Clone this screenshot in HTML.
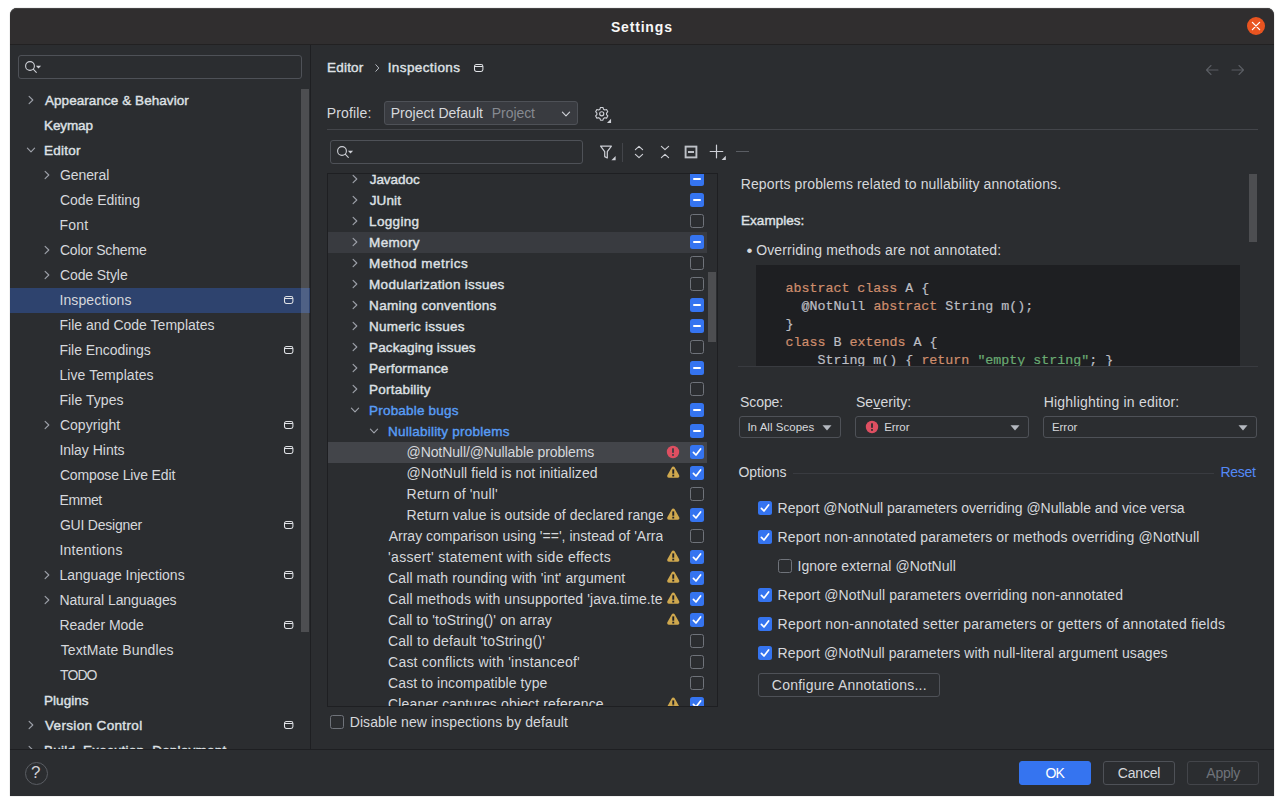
<!DOCTYPE html>
<html lang="en"><head><meta charset="utf-8"><title>Settings</title>
<style>
html,body{margin:0;padding:0;background:#fff;}
body{width:1284px;height:806px;overflow:hidden;position:relative;font-family:"Liberation Sans",sans-serif;font-size:14px;color:#D6D8DC;}
.win{position:absolute;left:0;top:0;width:1284px;height:806px;}
.win:before{content:"";position:absolute;left:10px;top:8px;width:1264px;height:788px;background:#2B2D30;border-radius:7px 7px 0 0;box-shadow:0 0 1px rgba(0,0,0,.55);}
.tb{position:absolute;left:10px;top:8px;width:1264px;height:36px;background:#302E2F;border-radius:7px 7px 0 0;box-shadow:inset 0 1px 0 rgba(255,255,255,.10);}
.tbl{position:absolute;left:10px;top:44px;width:1264px;height:1px;background:#222122;}
.t{position:absolute;white-space:pre;display:block;}
.t u{text-decoration:underline;text-underline-offset:1px;text-decoration-thickness:1px;}
.i{position:absolute;display:block;overflow:visible;}
.fld{position:absolute;box-sizing:border-box;border:1px solid #4E5157;border-radius:3px;background:#2B2D30;}
.combo{position:absolute;box-sizing:border-box;border:1px solid #4E5157;border-radius:3px;background:#393B40;}
.dd{position:absolute;box-sizing:border-box;border:1px solid #4E5157;border-radius:3px;}
.btn{position:absolute;box-sizing:border-box;border:1px solid #4E5157;border-radius:3px;}
.btn.pri{background:#3574F0;border-color:#3574F0;}
.btn.dis{border-color:#43454A;}
.side{position:absolute;left:10px;top:45px;width:300px;height:704px;overflow:hidden;}
.side>*{margin-left:-10px;margin-top:-45px;}
.sel{position:absolute;left:10px;width:300px;height:25px;background:#2E436E;}
.sb{position:absolute;background:rgba(255,255,255,.16);}
.vline{position:absolute;width:1px;background:#1E1F22;}
.hline{position:absolute;height:1px;}
.tree{position:absolute;left:327px;top:173px;width:391px;height:534px;box-sizing:border-box;border:1px solid #1E1F22;overflow:hidden;}
.row{position:absolute;left:0;width:379px;height:21px;}
.clip{position:absolute;left:0;width:335px;height:21px;overflow:hidden;display:block;}
.cb{position:absolute;width:14px;height:14px;box-sizing:border-box;border-radius:2.5px;display:block;}
.cb.off{border:1px solid #6F737A;}
.cb.on{background:#3574F0;}
.cb svg{display:block;}
.mn{position:absolute;left:3px;top:6px;width:8px;height:2px;background:#fff;border-radius:1px;}
.desc{position:absolute;left:738px;top:174px;width:520px;height:192px;overflow:hidden;}
.code{position:absolute;background:#1E1F22;}
.code pre{margin:0;position:absolute;left:29.4px;top:14.8px;-webkit-text-stroke:0.2px currentColor;font-family:"Liberation Mono",monospace;font-size:13.333px;line-height:18px;color:#BCBEC4;}
.code b{font-weight:normal;color:#CF8E6D;}
.code i{font-style:normal;color:#6AAB73;}
.help{position:absolute;left:25px;top:762px;width:23px;height:23px;box-sizing:border-box;border:1px solid #5A5D63;border-radius:50%;}
</style></head>
<body>
<div class="win">
<div class="tb"></div><div class="tbl"></div>
<span id="t1" class="t title" style="left:610.90px;letter-spacing:0.829px;top:15.6px;height:22px;line-height:22px;color:#F7F7F7;font-size:14px;font-weight:bold;">Settings</span>
<svg class="i" style="left:1247px;top:17px" width="18" height="18" viewBox="0 0 18 18"><circle cx="9" cy="9" r="9" fill="#E95420"/><path d="M5.4 5.4 L12.6 12.6 M12.6 5.4 L5.4 12.6" stroke="#fff" stroke-width="1.3" stroke-linecap="round"/></svg>
<div class="fld" style="left:18px;top:55px;width:284px;height:24px"></div>
<svg class="i" style="left:24px;top:60px" width="18" height="14" viewBox="0 0 18 14"><circle cx="6" cy="6" r="4.4" fill="none" stroke="#CED0D6" stroke-width="1.1"/><path d="M9.2 9.2 L12.3 12.3" stroke="#CED0D6" stroke-width="1.1" stroke-linecap="round"/><path d="M11.9 5.8 L17.1 5.8 L14.5 8.6Z" fill="#CED0D6"/></svg>
<div class="side">
<span id="t2" class="t " style="left:44.93px;letter-spacing:0.065px;top:88px;height:25px;line-height:25px;color:#DFE1E5;-webkit-text-stroke:0.4px currentColor;font-size:13.5px;">Appearance &amp; Behavior</span>
<svg class="i" style="left:25.5px;top:94px" width="10" height="12" viewBox="0 0 10 12"><path d="M3.1 2.4 L6.8 6 L3.1 9.6" fill="none" stroke="#9DA0A8" stroke-width="1.15" stroke-linecap="round" stroke-linejoin="round"/></svg>
<span id="t3" class="t " style="left:44.02px;letter-spacing:-0.114px;top:113px;height:25px;line-height:25px;color:#DFE1E5;-webkit-text-stroke:0.4px currentColor;font-size:13.5px;">Keymap</span>
<span id="t4" class="t " style="left:44.02px;letter-spacing:0.220px;top:138px;height:25px;line-height:25px;color:#DFE1E5;-webkit-text-stroke:0.4px currentColor;font-size:13.5px;">Editor</span>
<svg class="i" style="left:24.5px;top:145px" width="12" height="10" viewBox="0 0 12 10"><path d="M2.4 3.1 L6 6.8 L9.6 3.1" fill="none" stroke="#9DA0A8" stroke-width="1.15" stroke-linecap="round" stroke-linejoin="round"/></svg>
<span id="t5" class="t " style="left:59.90px;letter-spacing:-0.071px;top:163px;height:25px;line-height:25px;">General</span>
<svg class="i" style="left:42px;top:169px" width="10" height="12" viewBox="0 0 10 12"><path d="M3.1 2.4 L6.8 6 L3.1 9.6" fill="none" stroke="#9DA0A8" stroke-width="1.15" stroke-linecap="round" stroke-linejoin="round"/></svg>
<span id="t6" class="t " style="left:59.90px;letter-spacing:-0.013px;top:188px;height:25px;line-height:25px;">Code Editing</span>
<span id="t7" class="t " style="left:59.50px;letter-spacing:0.200px;top:213px;height:25px;line-height:25px;">Font</span>
<span id="t8" class="t " style="left:59.90px;letter-spacing:-0.173px;top:238px;height:25px;line-height:25px;">Color Scheme</span>
<svg class="i" style="left:42px;top:244px" width="10" height="12" viewBox="0 0 10 12"><path d="M3.1 2.4 L6.8 6 L3.1 9.6" fill="none" stroke="#9DA0A8" stroke-width="1.15" stroke-linecap="round" stroke-linejoin="round"/></svg>
<span id="t9" class="t " style="left:59.90px;letter-spacing:-0.078px;top:263px;height:25px;line-height:25px;">Code Style</span>
<svg class="i" style="left:42px;top:269px" width="10" height="12" viewBox="0 0 10 12"><path d="M3.1 2.4 L6.8 6 L3.1 9.6" fill="none" stroke="#9DA0A8" stroke-width="1.15" stroke-linecap="round" stroke-linejoin="round"/></svg>
<div class="sel" style="top:288px"></div>
<span id="t10" class="t " style="left:59.39px;letter-spacing:0.133px;top:288px;height:25px;line-height:25px;">Inspections</span>
<svg class="i" style="left:284px;top:296px" width="10" height="9" viewBox="0 0 10 9"><rect x="0.5" y="0.5" width="8.4" height="7" rx="1.9" fill="none" stroke="#DFE1E5" stroke-width="1.05"/><path d="M0.6 2.5 L8.8 2.5" stroke="#DFE1E5" stroke-width="1"/></svg>
<span id="t11" class="t " style="left:59.50px;letter-spacing:0.020px;top:313px;height:25px;line-height:25px;">File and Code Templates</span>
<span id="t12" class="t " style="left:59.50px;letter-spacing:-0.045px;top:338px;height:25px;line-height:25px;">File Encodings</span>
<svg class="i" style="left:284px;top:346px" width="10" height="9" viewBox="0 0 10 9"><rect x="0.5" y="0.5" width="8.4" height="7" rx="1.9" fill="none" stroke="#DFE1E5" stroke-width="1.05"/><path d="M0.6 2.5 L8.8 2.5" stroke="#DFE1E5" stroke-width="1"/></svg>
<span id="t13" class="t " style="left:59.50px;letter-spacing:0.069px;top:363px;height:25px;line-height:25px;">Live Templates</span>
<span id="t14" class="t " style="left:59.50px;letter-spacing:0.049px;top:388px;height:25px;line-height:25px;">File Types</span>
<span id="t15" class="t " style="left:59.90px;letter-spacing:0.037px;top:413px;height:25px;line-height:25px;">Copyright</span>
<svg class="i" style="left:42px;top:419px" width="10" height="12" viewBox="0 0 10 12"><path d="M3.1 2.4 L6.8 6 L3.1 9.6" fill="none" stroke="#9DA0A8" stroke-width="1.15" stroke-linecap="round" stroke-linejoin="round"/></svg>
<svg class="i" style="left:284px;top:421px" width="10" height="9" viewBox="0 0 10 9"><rect x="0.5" y="0.5" width="8.4" height="7" rx="1.9" fill="none" stroke="#DFE1E5" stroke-width="1.05"/><path d="M0.6 2.5 L8.8 2.5" stroke="#DFE1E5" stroke-width="1"/></svg>
<span id="t16" class="t " style="left:59.39px;letter-spacing:-0.019px;top:438px;height:25px;line-height:25px;">Inlay Hints</span>
<svg class="i" style="left:284px;top:446px" width="10" height="9" viewBox="0 0 10 9"><rect x="0.5" y="0.5" width="8.4" height="7" rx="1.9" fill="none" stroke="#DFE1E5" stroke-width="1.05"/><path d="M0.6 2.5 L8.8 2.5" stroke="#DFE1E5" stroke-width="1"/></svg>
<span id="t17" class="t " style="left:59.90px;letter-spacing:-0.130px;top:463px;height:25px;line-height:25px;">Compose Live Edit</span>
<span id="t18" class="t " style="left:59.50px;letter-spacing:-0.421px;top:488px;height:25px;line-height:25px;">Emmet</span>
<span id="t19" class="t " style="left:59.90px;letter-spacing:-0.225px;top:513px;height:25px;line-height:25px;">GUI Designer</span>
<svg class="i" style="left:284px;top:521px" width="10" height="9" viewBox="0 0 10 9"><rect x="0.5" y="0.5" width="8.4" height="7" rx="1.9" fill="none" stroke="#DFE1E5" stroke-width="1.05"/><path d="M0.6 2.5 L8.8 2.5" stroke="#DFE1E5" stroke-width="1"/></svg>
<span id="t20" class="t " style="left:59.39px;letter-spacing:0.259px;top:538px;height:25px;line-height:25px;">Intentions</span>
<span id="t21" class="t " style="left:59.50px;letter-spacing:-0.011px;top:563px;height:25px;line-height:25px;">Language Injections</span>
<svg class="i" style="left:42px;top:569px" width="10" height="12" viewBox="0 0 10 12"><path d="M3.1 2.4 L6.8 6 L3.1 9.6" fill="none" stroke="#9DA0A8" stroke-width="1.15" stroke-linecap="round" stroke-linejoin="round"/></svg>
<svg class="i" style="left:284px;top:571px" width="10" height="9" viewBox="0 0 10 9"><rect x="0.5" y="0.5" width="8.4" height="7" rx="1.9" fill="none" stroke="#DFE1E5" stroke-width="1.05"/><path d="M0.6 2.5 L8.8 2.5" stroke="#DFE1E5" stroke-width="1"/></svg>
<span id="t22" class="t " style="left:59.50px;letter-spacing:-0.075px;top:588px;height:25px;line-height:25px;">Natural Languages</span>
<svg class="i" style="left:42px;top:594px" width="10" height="12" viewBox="0 0 10 12"><path d="M3.1 2.4 L6.8 6 L3.1 9.6" fill="none" stroke="#9DA0A8" stroke-width="1.15" stroke-linecap="round" stroke-linejoin="round"/></svg>
<span id="t23" class="t " style="left:59.50px;letter-spacing:-0.050px;top:613px;height:25px;line-height:25px;">Reader Mode</span>
<svg class="i" style="left:284px;top:621px" width="10" height="9" viewBox="0 0 10 9"><rect x="0.5" y="0.5" width="8.4" height="7" rx="1.9" fill="none" stroke="#DFE1E5" stroke-width="1.05"/><path d="M0.6 2.5 L8.8 2.5" stroke="#DFE1E5" stroke-width="1"/></svg>
<span id="t24" class="t " style="left:60.77px;letter-spacing:0.102px;top:638px;height:25px;line-height:25px;">TextMate Bundles</span>
<span id="t25" class="t " style="left:60.02px;letter-spacing:-0.900px;top:663px;height:25px;line-height:25px;">TODO</span>
<span id="t26" class="t " style="left:44.02px;letter-spacing:0.043px;top:688px;height:25px;line-height:25px;color:#DFE1E5;-webkit-text-stroke:0.4px currentColor;font-size:13.5px;">Plugins</span>
<span id="t27" class="t " style="left:44.91px;letter-spacing:0.355px;top:713px;height:25px;line-height:25px;color:#DFE1E5;-webkit-text-stroke:0.4px currentColor;font-size:13.5px;">Version Control</span>
<svg class="i" style="left:25.5px;top:719px" width="10" height="12" viewBox="0 0 10 12"><path d="M3.1 2.4 L6.8 6 L3.1 9.6" fill="none" stroke="#9DA0A8" stroke-width="1.15" stroke-linecap="round" stroke-linejoin="round"/></svg>
<svg class="i" style="left:284px;top:721px" width="10" height="9" viewBox="0 0 10 9"><rect x="0.5" y="0.5" width="8.4" height="7" rx="1.9" fill="none" stroke="#DFE1E5" stroke-width="1.05"/><path d="M0.6 2.5 L8.8 2.5" stroke="#DFE1E5" stroke-width="1"/></svg>
<span id="t28" class="t " style="left:44.02px;letter-spacing:0.214px;top:738px;height:25px;line-height:25px;color:#DFE1E5;-webkit-text-stroke:0.4px currentColor;font-size:13.5px;">Build, Execution, Deployment</span>
<svg class="i" style="left:25.5px;top:744px" width="10" height="12" viewBox="0 0 10 12"><path d="M3.1 2.4 L6.8 6 L3.1 9.6" fill="none" stroke="#9DA0A8" stroke-width="1.15" stroke-linecap="round" stroke-linejoin="round"/></svg>
<div class="sb" style="left:301px;top:89px;width:8px;height:543px"></div>
</div>
<div class="vline" style="left:310px;top:45px;height:704px"></div>
<span id="t29" class="t " style="left:327.12px;letter-spacing:0.180px;top:55px;height:25px;line-height:25px;color:#DFE1E5;-webkit-text-stroke:0.4px currentColor;font-size:13.5px;">Editor</span>
<svg class="i" style="left:372px;top:62px" width="10" height="12" viewBox="0 0 10 12"><path d="M3.8 2.7 L6.8 6 L3.8 9.3" fill="none" stroke="#B4B8BF" stroke-width="1" stroke-linecap="round" stroke-linejoin="round"/></svg>
<span id="t30" class="t " style="left:387.70px;letter-spacing:0.398px;top:55px;height:25px;line-height:25px;color:#DFE1E5;-webkit-text-stroke:0.4px currentColor;font-size:13.5px;">Inspections</span>
<svg class="i" style="left:474px;top:64px" width="10" height="9" viewBox="0 0 10 9"><rect x="0.5" y="0.5" width="8.4" height="7" rx="1.9" fill="none" stroke="#DFE1E5" stroke-width="1.05"/><path d="M0.6 2.5 L8.8 2.5" stroke="#DFE1E5" stroke-width="1"/></svg>
<svg class="i" style="left:1205px;top:63px" width="14" height="14" viewBox="0 0 14 14"><path d="M13 7 L1.5 7 M6 2.5 L1.5 7 L6 11.5" fill="none" stroke="#5A5D63" stroke-width="1.1" stroke-linecap="round" stroke-linejoin="round"/></svg>
<svg class="i" style="left:1231px;top:63px" width="14" height="14" viewBox="0 0 14 14"><path d="M1 7 L12.5 7 M8 2.5 L12.5 7 L8 11.5" fill="none" stroke="#5A5D63" stroke-width="1.1" stroke-linecap="round" stroke-linejoin="round"/></svg>
<span id="t31" class="t " style="left:326.80px;letter-spacing:0.151px;top:101px;height:24px;line-height:24px;">Profile:</span>
<div class="combo" style="left:384px;top:101px;width:194px;height:24px"></div>
<span id="t32" class="t " style="left:390.70px;letter-spacing:0.029px;top:101px;height:24px;line-height:24px;">Project Default</span>
<span id="t33" class="t " style="left:491.80px;letter-spacing:-0.062px;top:101px;height:24px;line-height:24px;color:#868A91;">Project</span>
<svg class="i" style="left:560px;top:108.5px" width="12" height="10" viewBox="0 0 12 10"><path d="M2.4 3.1 L6 6.8 L9.6 3.1" fill="none" stroke="#CED0D6" stroke-width="1.15" stroke-linecap="round" stroke-linejoin="round"/></svg>
<svg class="i" style="left:593.5px;top:105.7px" width="17.5" height="17.5" viewBox="0 0 17 17"><path d="M6.3 1.4h2.4l.5 1.7 1.3.75 1.7-.4 1.2 2.1-1.2 1.3v1.5l1.2 1.3-1.2 2.1-1.7-.4-1.3.75-.5 1.7H6.3l-.5-1.7-1.3-.75-1.7.4-1.2-2.1 1.2-1.3V6.85L1.6 5.55l1.2-2.1 1.7.4 1.3-.75z" fill="none" stroke="#CED0D6" stroke-width="1.1" stroke-linejoin="round"/><circle cx="7.5" cy="7.6" r="2" fill="none" stroke="#CED0D6" stroke-width="1.1"/><path d="M16.6 12.4 L16.6 16.4 L12.6 16.4Z" fill="#CED0D6"/></svg>
<div class="hline" style="left:327px;top:129px;width:931px;background:#43454A"></div>
<div class="fld" style="left:330px;top:140px;width:253px;height:24px"></div>
<svg class="i" style="left:336px;top:145px" width="18" height="14" viewBox="0 0 18 14"><circle cx="6" cy="6" r="4.4" fill="none" stroke="#CED0D6" stroke-width="1.1"/><path d="M9.2 9.2 L12.3 12.3" stroke="#CED0D6" stroke-width="1.1" stroke-linecap="round"/><path d="M11.9 5.8 L17.1 5.8 L14.5 8.6Z" fill="#CED0D6"/></svg>
<svg class="i" style="left:599px;top:144px" width="18" height="17" viewBox="0 0 18 17"><path d="M1.6 2.1 L12.4 2.1 L8.3 7.6 L8.3 14 L5.7 12.6 L5.7 7.6Z" fill="none" stroke="#CED0D6" stroke-width="1.2" stroke-linejoin="round"/><path d="M16.6 12 L16.6 16.2 L12.4 16.2Z" fill="#CED0D6"/></svg>
<div class="vline" style="left:622px;top:143px;height:19px;background:#43454A"></div>
<svg class="i" style="left:632px;top:144px" width="14" height="16" viewBox="0 0 14 16"><path d="M3.4 5.7 L7 2.3 L10.6 5.7 M3.4 10.3 L7 13.7 L10.6 10.3" fill="none" stroke="#CED0D6" stroke-width="1.15" stroke-linecap="round" stroke-linejoin="round"/></svg>
<svg class="i" style="left:658px;top:144px" width="14" height="16" viewBox="0 0 14 16"><path d="M3.4 2.3 L7 5.7 L10.6 2.3 M3.4 13.7 L7 10.3 L10.6 13.7" fill="none" stroke="#CED0D6" stroke-width="1.15" stroke-linecap="round" stroke-linejoin="round"/></svg>
<svg class="i" style="left:684px;top:145px" width="14" height="14" viewBox="0 0 14 14"><rect x="1.6" y="1.6" width="10.8" height="10.8" fill="none" stroke="#BEC1C7" stroke-width="1.9"/><rect x="4" y="6" width="6" height="2" fill="#BEC1C7"/></svg>
<svg class="i" style="left:709px;top:144px" width="18" height="18" viewBox="0 0 18 18"><path d="M7.5 1.2 L7.5 13.8 M1.2 7.5 L13.8 7.5" stroke="#CED0D6" stroke-width="1.2" stroke-linecap="round"/><path d="M16.8 11.8 L16.8 16 L12.6 16Z" fill="#CED0D6"/></svg>
<div class="hline" style="left:736px;top:151px;width:13px;background:#5A5D63"></div>
<div class="tree">
<span class="clip" style="top:-5px"><span id="t34" class="t " style="left:41.70px;letter-spacing:-0.038px;top:0px;height:21px;line-height:21px;color:#DFE1E5;-webkit-text-stroke:0.4px currentColor;font-size:13.5px;">Javadoc</span></span>
<svg class="i" style="left:22px;top:-1px" width="10" height="12" viewBox="0 0 10 12"><path d="M3.1 2.4 L6.8 6 L3.1 9.6" fill="none" stroke="#9DA0A8" stroke-width="1.15" stroke-linecap="round" stroke-linejoin="round"/></svg>
<span class="cb on" style="left:362px;top:-2px"><i class="mn"></i></span>
<span class="clip" style="top:16px"><span id="t35" class="t " style="left:41.70px;letter-spacing:0.141px;top:0px;height:21px;line-height:21px;color:#DFE1E5;-webkit-text-stroke:0.4px currentColor;font-size:13.5px;">JUnit</span></span>
<svg class="i" style="left:22px;top:20px" width="10" height="12" viewBox="0 0 10 12"><path d="M3.1 2.4 L6.8 6 L3.1 9.6" fill="none" stroke="#9DA0A8" stroke-width="1.15" stroke-linecap="round" stroke-linejoin="round"/></svg>
<span class="cb on" style="left:362px;top:19px"><i class="mn"></i></span>
<span class="clip" style="top:37px"><span id="t36" class="t " style="left:41.12px;letter-spacing:0.316px;top:0px;height:21px;line-height:21px;color:#DFE1E5;-webkit-text-stroke:0.4px currentColor;font-size:13.5px;">Logging</span></span>
<svg class="i" style="left:22px;top:41px" width="10" height="12" viewBox="0 0 10 12"><path d="M3.1 2.4 L6.8 6 L3.1 9.6" fill="none" stroke="#9DA0A8" stroke-width="1.15" stroke-linecap="round" stroke-linejoin="round"/></svg>
<span class="cb off" style="left:362px;top:40px"></span>
<div class="row" style="top:58px;background:#393B40"></div>
<span class="clip" style="top:58px"><span id="t37" class="t " style="left:41.12px;letter-spacing:0.316px;top:0px;height:21px;line-height:21px;color:#DFE1E5;-webkit-text-stroke:0.4px currentColor;font-size:13.5px;">Memory</span></span>
<svg class="i" style="left:22px;top:62px" width="10" height="12" viewBox="0 0 10 12"><path d="M3.1 2.4 L6.8 6 L3.1 9.6" fill="none" stroke="#9DA0A8" stroke-width="1.15" stroke-linecap="round" stroke-linejoin="round"/></svg>
<span class="cb on" style="left:362px;top:61px"><i class="mn"></i></span>
<span class="clip" style="top:79px"><span id="t38" class="t " style="left:41.12px;letter-spacing:0.481px;top:0px;height:21px;line-height:21px;color:#DFE1E5;-webkit-text-stroke:0.4px currentColor;font-size:13.5px;">Method metrics</span></span>
<svg class="i" style="left:22px;top:83px" width="10" height="12" viewBox="0 0 10 12"><path d="M3.1 2.4 L6.8 6 L3.1 9.6" fill="none" stroke="#9DA0A8" stroke-width="1.15" stroke-linecap="round" stroke-linejoin="round"/></svg>
<span class="cb off" style="left:362px;top:82px"></span>
<span class="clip" style="top:100px"><span id="t39" class="t " style="left:41.12px;letter-spacing:0.268px;top:0px;height:21px;line-height:21px;color:#DFE1E5;-webkit-text-stroke:0.4px currentColor;font-size:13.5px;">Modularization issues</span></span>
<svg class="i" style="left:22px;top:104px" width="10" height="12" viewBox="0 0 10 12"><path d="M3.1 2.4 L6.8 6 L3.1 9.6" fill="none" stroke="#9DA0A8" stroke-width="1.15" stroke-linecap="round" stroke-linejoin="round"/></svg>
<span class="cb off" style="left:362px;top:103px"></span>
<span class="clip" style="top:121px"><span id="t40" class="t " style="left:41.12px;letter-spacing:0.286px;top:0px;height:21px;line-height:21px;color:#DFE1E5;-webkit-text-stroke:0.4px currentColor;font-size:13.5px;">Naming conventions</span></span>
<svg class="i" style="left:22px;top:125px" width="10" height="12" viewBox="0 0 10 12"><path d="M3.1 2.4 L6.8 6 L3.1 9.6" fill="none" stroke="#9DA0A8" stroke-width="1.15" stroke-linecap="round" stroke-linejoin="round"/></svg>
<span class="cb on" style="left:362px;top:124px"><i class="mn"></i></span>
<span class="clip" style="top:142px"><span id="t41" class="t " style="left:41.12px;letter-spacing:0.235px;top:0px;height:21px;line-height:21px;color:#DFE1E5;-webkit-text-stroke:0.4px currentColor;font-size:13.5px;">Numeric issues</span></span>
<svg class="i" style="left:22px;top:146px" width="10" height="12" viewBox="0 0 10 12"><path d="M3.1 2.4 L6.8 6 L3.1 9.6" fill="none" stroke="#9DA0A8" stroke-width="1.15" stroke-linecap="round" stroke-linejoin="round"/></svg>
<span class="cb on" style="left:362px;top:145px"><i class="mn"></i></span>
<span class="clip" style="top:163px"><span id="t42" class="t " style="left:41.12px;letter-spacing:0.094px;top:0px;height:21px;line-height:21px;color:#DFE1E5;-webkit-text-stroke:0.4px currentColor;font-size:13.5px;">Packaging issues</span></span>
<svg class="i" style="left:22px;top:167px" width="10" height="12" viewBox="0 0 10 12"><path d="M3.1 2.4 L6.8 6 L3.1 9.6" fill="none" stroke="#9DA0A8" stroke-width="1.15" stroke-linecap="round" stroke-linejoin="round"/></svg>
<span class="cb off" style="left:362px;top:166px"></span>
<span class="clip" style="top:184px"><span id="t43" class="t " style="left:41.12px;letter-spacing:0.198px;top:0px;height:21px;line-height:21px;color:#DFE1E5;-webkit-text-stroke:0.4px currentColor;font-size:13.5px;">Performance</span></span>
<svg class="i" style="left:22px;top:188px" width="10" height="12" viewBox="0 0 10 12"><path d="M3.1 2.4 L6.8 6 L3.1 9.6" fill="none" stroke="#9DA0A8" stroke-width="1.15" stroke-linecap="round" stroke-linejoin="round"/></svg>
<span class="cb on" style="left:362px;top:187px"><i class="mn"></i></span>
<span class="clip" style="top:205px"><span id="t44" class="t " style="left:41.12px;letter-spacing:0.209px;top:0px;height:21px;line-height:21px;color:#DFE1E5;-webkit-text-stroke:0.4px currentColor;font-size:13.5px;">Portability</span></span>
<svg class="i" style="left:22px;top:209px" width="10" height="12" viewBox="0 0 10 12"><path d="M3.1 2.4 L6.8 6 L3.1 9.6" fill="none" stroke="#9DA0A8" stroke-width="1.15" stroke-linecap="round" stroke-linejoin="round"/></svg>
<span class="cb off" style="left:362px;top:208px"></span>
<span class="clip" style="top:226px"><span id="t45" class="t " style="left:41.12px;letter-spacing:0.184px;top:0px;height:21px;line-height:21px;color:#589DF6;-webkit-text-stroke:0.4px currentColor;font-size:13.5px;">Probable bugs</span></span>
<svg class="i" style="left:21px;top:231px" width="12" height="10" viewBox="0 0 12 10"><path d="M2.4 3.1 L6 6.8 L9.6 3.1" fill="none" stroke="#9DA0A8" stroke-width="1.15" stroke-linecap="round" stroke-linejoin="round"/></svg>
<span class="cb on" style="left:362px;top:229px"><i class="mn"></i></span>
<span class="clip" style="top:247px"><span id="t46" class="t " style="left:60.02px;letter-spacing:0.232px;top:0px;height:21px;line-height:21px;color:#589DF6;-webkit-text-stroke:0.4px currentColor;font-size:13.5px;">Nullability problems</span></span>
<svg class="i" style="left:40px;top:252px" width="12" height="10" viewBox="0 0 12 10"><path d="M2.4 3.1 L6 6.8 L9.6 3.1" fill="none" stroke="#9DA0A8" stroke-width="1.15" stroke-linecap="round" stroke-linejoin="round"/></svg>
<span class="cb on" style="left:362px;top:250px"><i class="mn"></i></span>
<div class="row" style="top:268px;background:#43454A"></div>
<span class="clip" style="top:268px"><span id="t47" class="t " style="left:78.56px;letter-spacing:-0.095px;top:0px;height:21px;line-height:21px;">@NotNull/@Nullable problems</span></span>
<svg class="i" style="left:339px;top:272px" width="12" height="12" viewBox="0 0 12 12"><circle cx="6" cy="6" r="6.2" fill="#DE4F61"/><rect x="5.1" y="2.3" width="1.8" height="4.5" fill="#3B3E45"/><rect x="5.1" y="8.1" width="1.8" height="1.7" fill="#3B3E45"/></svg>
<span class="cb on" style="left:362px;top:271px"><svg width="14" height="14" viewBox="0 0 14 14"><path d="M3.4 7.3 L6 10 L10.6 3.9" fill="none" stroke="#fff" stroke-width="1.7" stroke-linecap="round" stroke-linejoin="round"/></svg></span>
<span class="clip" style="top:289px"><span id="t48" class="t " style="left:78.56px;letter-spacing:0.079px;top:0px;height:21px;line-height:21px;">@NotNull field is not initialized</span></span>
<svg class="i" style="left:338.75px;top:292.4px" width="13" height="12" viewBox="0 0 13 12"><path d="M6.25 2.1 L10.75 10.1 L1.75 10.1Z" fill="#CFA84E" stroke="#CFA84E" stroke-width="3.2" stroke-linejoin="round"/><rect x="5.3" y="3.4" width="1.9" height="4.3" fill="#1F2128"/><rect x="5.3" y="8.7" width="1.9" height="1.8" fill="#1F2128"/></svg>
<span class="cb on" style="left:362px;top:292px"><svg width="14" height="14" viewBox="0 0 14 14"><path d="M3.4 7.3 L6 10 L10.6 3.9" fill="none" stroke="#fff" stroke-width="1.7" stroke-linecap="round" stroke-linejoin="round"/></svg></span>
<span class="clip" style="top:310px"><span id="t49" class="t " style="left:78.60px;letter-spacing:0.171px;top:0px;height:21px;line-height:21px;">Return of 'null'</span></span>
<span class="cb off" style="left:362px;top:313px"></span>
<span class="clip" style="top:331px"><span id="t50" class="t " style="left:78.60px;letter-spacing:0.046px;top:0px;height:21px;line-height:21px;">Return value is outside of declared range</span></span>
<svg class="i" style="left:338.75px;top:334.4px" width="13" height="12" viewBox="0 0 13 12"><path d="M6.25 2.1 L10.75 10.1 L1.75 10.1Z" fill="#CFA84E" stroke="#CFA84E" stroke-width="3.2" stroke-linejoin="round"/><rect x="5.3" y="3.4" width="1.9" height="4.3" fill="#1F2128"/><rect x="5.3" y="8.7" width="1.9" height="1.8" fill="#1F2128"/></svg>
<span class="cb on" style="left:362px;top:334px"><svg width="14" height="14" viewBox="0 0 14 14"><path d="M3.4 7.3 L6 10 L10.6 3.9" fill="none" stroke="#fff" stroke-width="1.7" stroke-linecap="round" stroke-linejoin="round"/></svg></span>
<span class="clip" style="top:352px"><span id="t51" class="t " style="left:60.65px;letter-spacing:0.012px;top:0px;height:21px;line-height:21px;">Array comparison using '==', instead of 'Arrays.equals()'</span></span>
<span class="cb off" style="left:362px;top:355px"></span>
<span class="clip" style="top:373px"><span id="t52" class="t " style="left:60.10px;letter-spacing:0.301px;top:0px;height:21px;line-height:21px;">'assert' statement with side effects</span></span>
<svg class="i" style="left:338.75px;top:376.4px" width="13" height="12" viewBox="0 0 13 12"><path d="M6.25 2.1 L10.75 10.1 L1.75 10.1Z" fill="#CFA84E" stroke="#CFA84E" stroke-width="3.2" stroke-linejoin="round"/><rect x="5.3" y="3.4" width="1.9" height="4.3" fill="#1F2128"/><rect x="5.3" y="8.7" width="1.9" height="1.8" fill="#1F2128"/></svg>
<span class="cb on" style="left:362px;top:376px"><svg width="14" height="14" viewBox="0 0 14 14"><path d="M3.4 7.3 L6 10 L10.6 3.9" fill="none" stroke="#fff" stroke-width="1.7" stroke-linecap="round" stroke-linejoin="round"/></svg></span>
<span class="clip" style="top:394px"><span id="t53" class="t " style="left:60.10px;letter-spacing:0.103px;top:0px;height:21px;line-height:21px;">Call math rounding with 'int' argument</span></span>
<svg class="i" style="left:338.75px;top:397.4px" width="13" height="12" viewBox="0 0 13 12"><path d="M6.25 2.1 L10.75 10.1 L1.75 10.1Z" fill="#CFA84E" stroke="#CFA84E" stroke-width="3.2" stroke-linejoin="round"/><rect x="5.3" y="3.4" width="1.9" height="4.3" fill="#1F2128"/><rect x="5.3" y="8.7" width="1.9" height="1.8" fill="#1F2128"/></svg>
<span class="cb on" style="left:362px;top:397px"><svg width="14" height="14" viewBox="0 0 14 14"><path d="M3.4 7.3 L6 10 L10.6 3.9" fill="none" stroke="#fff" stroke-width="1.7" stroke-linecap="round" stroke-linejoin="round"/></svg></span>
<span class="clip" style="top:415px"><span id="t54" class="t " style="left:60.10px;letter-spacing:0.099px;top:0px;height:21px;line-height:21px;">Call methods with unsupported 'java.time.temporal' units</span></span>
<svg class="i" style="left:338.75px;top:418.4px" width="13" height="12" viewBox="0 0 13 12"><path d="M6.25 2.1 L10.75 10.1 L1.75 10.1Z" fill="#CFA84E" stroke="#CFA84E" stroke-width="3.2" stroke-linejoin="round"/><rect x="5.3" y="3.4" width="1.9" height="4.3" fill="#1F2128"/><rect x="5.3" y="8.7" width="1.9" height="1.8" fill="#1F2128"/></svg>
<span class="cb on" style="left:362px;top:418px"><svg width="14" height="14" viewBox="0 0 14 14"><path d="M3.4 7.3 L6 10 L10.6 3.9" fill="none" stroke="#fff" stroke-width="1.7" stroke-linecap="round" stroke-linejoin="round"/></svg></span>
<span class="clip" style="top:436px"><span id="t55" class="t " style="left:60.10px;letter-spacing:0.070px;top:0px;height:21px;line-height:21px;">Call to 'toString()' on array</span></span>
<svg class="i" style="left:338.75px;top:439.4px" width="13" height="12" viewBox="0 0 13 12"><path d="M6.25 2.1 L10.75 10.1 L1.75 10.1Z" fill="#CFA84E" stroke="#CFA84E" stroke-width="3.2" stroke-linejoin="round"/><rect x="5.3" y="3.4" width="1.9" height="4.3" fill="#1F2128"/><rect x="5.3" y="8.7" width="1.9" height="1.8" fill="#1F2128"/></svg>
<span class="cb on" style="left:362px;top:439px"><svg width="14" height="14" viewBox="0 0 14 14"><path d="M3.4 7.3 L6 10 L10.6 3.9" fill="none" stroke="#fff" stroke-width="1.7" stroke-linecap="round" stroke-linejoin="round"/></svg></span>
<span class="clip" style="top:457px"><span id="t56" class="t " style="left:60.10px;letter-spacing:0.168px;top:0px;height:21px;line-height:21px;">Call to default 'toString()'</span></span>
<span class="cb off" style="left:362px;top:460px"></span>
<span class="clip" style="top:478px"><span id="t57" class="t " style="left:60.10px;letter-spacing:0.211px;top:0px;height:21px;line-height:21px;">Cast conflicts with 'instanceof'</span></span>
<span class="cb off" style="left:362px;top:481px"></span>
<span class="clip" style="top:499px"><span id="t58" class="t " style="left:60.10px;letter-spacing:0.085px;top:0px;height:21px;line-height:21px;">Cast to incompatible type</span></span>
<span class="cb off" style="left:362px;top:502px"></span>
<span class="clip" style="top:520px"><span id="t59" class="t " style="left:60.10px;letter-spacing:0.144px;top:0px;height:21px;line-height:21px;">Cleaner captures object reference</span></span>
<svg class="i" style="left:338.75px;top:523.4px" width="13" height="12" viewBox="0 0 13 12"><path d="M6.25 2.1 L10.75 10.1 L1.75 10.1Z" fill="#CFA84E" stroke="#CFA84E" stroke-width="3.2" stroke-linejoin="round"/><rect x="5.3" y="3.4" width="1.9" height="4.3" fill="#1F2128"/><rect x="5.3" y="8.7" width="1.9" height="1.8" fill="#1F2128"/></svg>
<span class="cb on" style="left:362px;top:523px"><svg width="14" height="14" viewBox="0 0 14 14"><path d="M3.4 7.3 L6 10 L10.6 3.9" fill="none" stroke="#fff" stroke-width="1.7" stroke-linecap="round" stroke-linejoin="round"/></svg></span>
<div class="sb" style="left:380px;top:98px;width:8px;height:70px"></div>
</div>
<span class="cb off" style="left:330px;top:715px"></span>
<span id="t60" class="t " style="left:349.70px;letter-spacing:0.103px;top:710px;height:24px;line-height:24px;">Disable new inspections by default</span>
<div class="desc">
<span id="t61" class="t " style="left:2.70px;letter-spacing:0.118px;top:0px;height:21px;line-height:21px;">Reports problems related to nullability annotations.</span>
<span id="t62" class="t " style="left:3.02px;letter-spacing:0.034px;top:36px;height:21px;line-height:21px;color:#DFE1E5;-webkit-text-stroke:0.4px currentColor;font-size:13.5px;">Examples:</span>
<span id="t63" class="t " style="left:8.40px;letter-spacing:0.000px;top:66px;height:21px;line-height:21px;font-size:17px;">&bull;</span>
<span id="t64" class="t " style="left:18.16px;letter-spacing:0.147px;top:66px;height:21px;line-height:21px;">Overriding methods are not annotated:</span>
<div class="code" style="left:18px;top:91px;width:484px;height:120px">
<pre><b>abstract class</b> A {
  @NotNull <b>abstract</b> String m();
}
<b>class</b> B <b>extends</b> A {
    String m() { <b>return</b> <i>"empty string"</i>; }
}</pre>
</div>
<div class="sb" style="left:511px;top:0px;width:8px;height:68px"></div>
</div>
<div class="hline" style="left:738px;top:366px;width:520px;background:#393B40"></div>
<span id="t65" class="t " style="left:739.94px;letter-spacing:-0.057px;top:390px;height:24px;line-height:24px;">Scope:</span>
<span id="t66" class="t " style="left:855.94px;letter-spacing:0.095px;top:390px;height:24px;line-height:24px;">Se<u>v</u>erity:</span>
<span id="t67" class="t " style="left:1043.70px;letter-spacing:0.216px;top:390px;height:24px;line-height:24px;">Highlighting in editor:</span>
<div class="dd" style="left:739px;top:416px;width:102px;height:22px"></div>
<span id="t68" class="t " style="left:747.40px;letter-spacing:0.033px;top:415.5px;height:22px;line-height:22px;font-size:11.5px;">In All Scopes</span>
<svg class="i" style="left:822.2px;top:424.5px" width="10" height="6" viewBox="0 0 10 6"><path d="M0.5 0.3 L9.5 0.3 L5 5.6Z" fill="#B4B8BF"/></svg>
<div class="dd" style="left:855px;top:416px;width:174px;height:22px"></div>
<svg class="i" style="left:866px;top:421.2px" width="12" height="12" viewBox="0 0 12 12"><circle cx="6" cy="6" r="6.2" fill="#DE4F61"/><rect x="5.1" y="2.3" width="1.8" height="4.5" fill="#2B2D30"/><rect x="5.1" y="8.1" width="1.8" height="1.7" fill="#2B2D30"/></svg>
<span id="t69" class="t " style="left:884.14px;letter-spacing:-0.045px;top:415.5px;height:22px;line-height:22px;font-size:11.5px;">Error</span>
<svg class="i" style="left:1009.8px;top:424.5px" width="10" height="6" viewBox="0 0 10 6"><path d="M0.5 0.3 L9.5 0.3 L5 5.6Z" fill="#B4B8BF"/></svg>
<div class="dd" style="left:1043px;top:416px;width:214px;height:22px"></div>
<span id="t70" class="t " style="left:1051.94px;letter-spacing:-0.045px;top:415.5px;height:22px;line-height:22px;font-size:11.5px;">Error</span>
<svg class="i" style="left:1238px;top:424.5px" width="10" height="6" viewBox="0 0 10 6"><path d="M0.5 0.3 L9.5 0.3 L5 5.6Z" fill="#B4B8BF"/></svg>
<span id="t71" class="t " style="left:738.47px;letter-spacing:-0.044px;top:459.5px;height:24px;line-height:24px;">Options</span>
<div class="hline" style="left:793px;top:473px;width:421px;background:#393B40"></div>
<span id="t72" class="t " style="left:1220.40px;letter-spacing:-0.294px;top:459.5px;height:24px;line-height:24px;color:#548AF7;">Reset</span>
<span class="cb on" style="left:758px;top:501px"><svg width="14" height="14" viewBox="0 0 14 14"><path d="M3.4 7.3 L6 10 L10.6 3.9" fill="none" stroke="#fff" stroke-width="1.7" stroke-linecap="round" stroke-linejoin="round"/></svg></span>
<span id="t73" class="t " style="left:777.60px;letter-spacing:-0.031px;top:496px;height:24px;line-height:24px;">Report @NotNull parameters overriding @Nullable and vice versa</span>
<span class="cb on" style="left:758px;top:530px"><svg width="14" height="14" viewBox="0 0 14 14"><path d="M3.4 7.3 L6 10 L10.6 3.9" fill="none" stroke="#fff" stroke-width="1.7" stroke-linecap="round" stroke-linejoin="round"/></svg></span>
<span id="t74" class="t " style="left:777.60px;letter-spacing:0.124px;top:525px;height:24px;line-height:24px;">Report non-annotated parameters or methods overriding @NotNull</span>
<span class="cb off" style="left:778px;top:559px"></span>
<span id="t75" class="t " style="left:797.49px;letter-spacing:0.043px;top:554px;height:24px;line-height:24px;">Ignore external @NotNull</span>
<span class="cb on" style="left:758px;top:588px"><svg width="14" height="14" viewBox="0 0 14 14"><path d="M3.4 7.3 L6 10 L10.6 3.9" fill="none" stroke="#fff" stroke-width="1.7" stroke-linecap="round" stroke-linejoin="round"/></svg></span>
<span id="t76" class="t " style="left:777.60px;letter-spacing:0.103px;top:583px;height:24px;line-height:24px;">Report @NotNull parameters overriding non-annotated</span>
<span class="cb on" style="left:758px;top:617px"><svg width="14" height="14" viewBox="0 0 14 14"><path d="M3.4 7.3 L6 10 L10.6 3.9" fill="none" stroke="#fff" stroke-width="1.7" stroke-linecap="round" stroke-linejoin="round"/></svg></span>
<span id="t77" class="t " style="left:777.60px;letter-spacing:0.238px;top:612px;height:24px;line-height:24px;">Report non-annotated setter parameters or getters of annotated fields</span>
<span class="cb on" style="left:758px;top:646px"><svg width="14" height="14" viewBox="0 0 14 14"><path d="M3.4 7.3 L6 10 L10.6 3.9" fill="none" stroke="#fff" stroke-width="1.7" stroke-linecap="round" stroke-linejoin="round"/></svg></span>
<span id="t78" class="t " style="left:777.60px;letter-spacing:0.077px;top:641px;height:24px;line-height:24px;">Report @NotNull parameters with null-literal argument usages</span>
<div class="btn" style="left:758px;top:673px;width:182px;height:24px"></div>
<span id="t79" class="t " style="left:771.80px;letter-spacing:0.235px;top:673px;height:24px;line-height:24px;">Configure Annotations...</span>
<div class="hline" style="left:10px;top:749px;width:1264px;background:#1E1F22"></div>
<div class="help"></div>
<span id="t80" class="t " style="left:31.11px;letter-spacing:0.000px;top:761px;height:23px;line-height:23px;color:#CED0D6;font-size:17px;">?</span>
<div class="btn pri" style="left:1019px;top:761px;width:72px;height:24px"></div>
<span id="t81" class="t " style="left:1045.58px;letter-spacing:-0.900px;top:761px;height:24px;line-height:24px;color:#fff;">OK</span>
<div class="btn" style="left:1103px;top:761px;width:72px;height:24px"></div>
<span id="t82" class="t " style="left:1117.80px;letter-spacing:-0.194px;top:761px;height:24px;line-height:24px;">Cancel</span>
<div class="btn dis" style="left:1187px;top:761px;width:72px;height:24px"></div>
<span id="t83" class="t " style="left:1206.35px;letter-spacing:-0.261px;top:761px;height:24px;line-height:24px;color:#6F737A;">Apply</span>
</div>
</body></html>
